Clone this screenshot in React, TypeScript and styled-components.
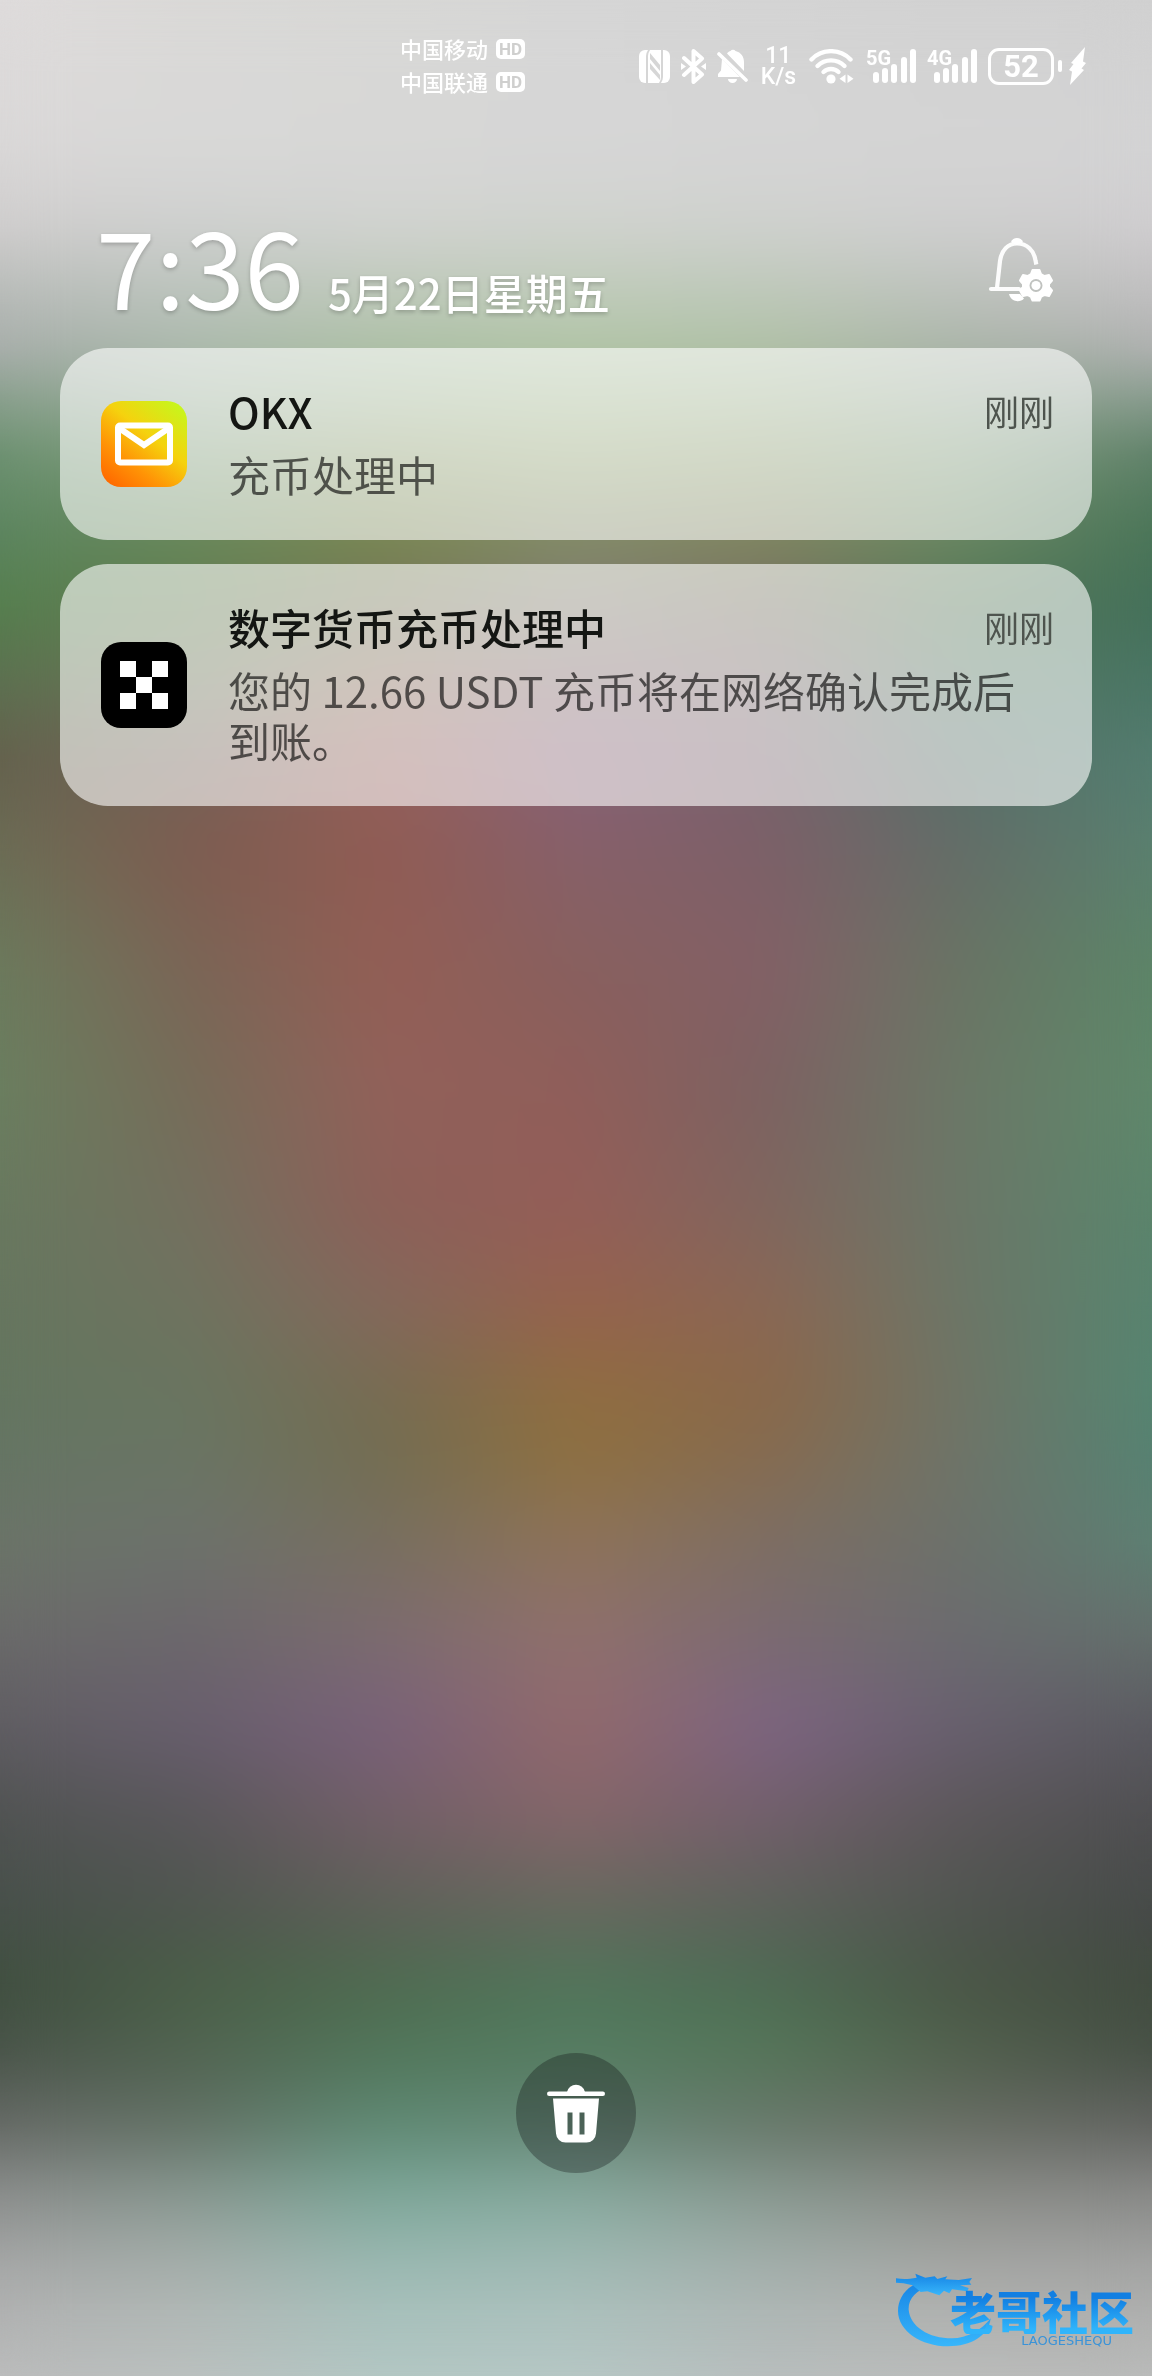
import React from "react";
import styled, { createGlobalStyle } from "styled-components";

const GlobalStyle = createGlobalStyle`
  *, *::before, *::after { box-sizing: border-box; }
  body {
    margin: 0;
    font-family: "Noto Sans CJK SC", "Noto Sans", sans-serif;
  }
  h1, h2, p { margin: 0; }
`;

/* Wallpaper: each row of colours spreads across the page and fades into the next row. */
type WallpaperRow = { at: number; colors: string };

const wallpaper: WallpaperRow[] = [
  { at: 0, colors: "#dfdcdc #dad9d7 #d8d8d6 #d6d6d6 #d4d4d4 #d2d2d2 #d1d1d1" },
  { at: 6.4, colors: "#d9d7d7 #d8d8d7 #d7d7d6 #d6d6d6 #d5d5d5 #d4d4d4 #d3d3d4" },
  { at: 9.6, colors: "#cfcdcd #cfd0cf #d1d3d0 #d0d3ce #cfd1ce #cfcfcf #cfcdcf" },
  { at: 12.8, colors: "#b4b8b5 #b7c1b8 #bac6b5 #bbc9b5 #bac6b5 #b9bfb8 #bdbcbd" },
  { at: 14.7, colors: "#a9aeac #adbaae #aec2a8 #b2c6a8 #b1c2a8 #acb5aa #b0b1b1" },
  { at: 16.6, colors: "#8ba08f #9cb09c #a0b596 #a5b994 #a2b494 #98aa98 #8a9d90" },
  { at: 19.1, colors: "#6b9070 #809e7a #909f70 #96a876 #90a174 #7f9c7a #5e8068" },
  { at: 22.3, colors: "#5c8560 #67875a #788750 #828a67 #808660 #6a8762 #4a7558" },
  { at: 25.5, colors: "#557f4e #627d50 #767658 #807d70 #767060 #537655 #44705a" },
  { at: 28.7, colors: "#5c7050 #6c7658 #8a6e5a #82696c #7a696b #557662 #4a7665" },
  { at: 31.9, colors: "#64614d #736258 #965f5a #876278 #78626c #566f68 #547d70" },
  { at: 35.7, colors: "#6b6d55 #7e5c50 #905c54 #87606a #7c6068 #646d68 #5a806f" },
  { at: 40.8, colors: "#6b7b5d #7a6556 #935e55 #88605e #836066 #697464 #5c8568" },
  { at: 45.9, colors: "#6a7f60 #766c59 #92615a #905e5a #7c6262 #6b7867 #5f886b" },
  { at: 51, colors: "#68795f #73705f #8c6058 #945e58 #80665e #6b7768 #5a856c" },
  { at: 54.8, colors: "#66765f #6f735f #84685c #96624d #8a6755 #6c7667 #58846f" },
  { at: 58.7, colors: "#647660 #697560 #776c52 #906d40 #8a684a #6f7466 #558571" },
  { at: 61.2, colors: "#657564 #6a7564 #736d52 #8e7040 #866b50 #6e7469 #568272" },
  { at: 65, colors: "#6b7468 #6d726c #786f60 #8e735a #7d6e64 #6c716b #5d8073" },
  { at: 68.9, colors: "#6a6a6a #6c676c #7c6b70 #90706e #7b6a72 #6b6b6f #646f6c" },
  { at: 72.7, colors: "#5f5d62 #685e6e #79617a #92696c #7d6482 #685f6f #5a5a60" },
  { at: 76.5, colors: "#505352 #59575a #725f67 #84666a #725f6b #5b5759 #4f4f51" },
  { at: 80.4, colors: "#47504a #4f564f #5d6158 #65695e #5c625a #505550 #464a48" },
  { at: 83.5, colors: "#404f40 #4a5f47 #4e6b50 #50755a #4d6b53 #4a5646 #424c40" },
  { at: 86.1, colors: "#485348 #506350 #517559 #547c60 #547658 #50604c #465045" },
  { at: 89.3, colors: "#646864 #617064 #5d8872 #658575 #667669 #666b62 #60625f" },
  { at: 92.5, colors: "#8d8f8e #8a9a93 #7fa89b #88aba0 #8b9b93 #8c8e8a #8b8c8a" },
  { at: 95.7, colors: "#a9aaaa #a9b1ae #9ebbb5 #a3bbb6 #a6b1ae #a8a9a7 #a6a7a6" },
  { at: 100, colors: "#bcbdbd #bcc2c1 #b5c8c5 #b8c8c6 #babfbf #bcbebd #bbbcbb" },
];

const Page = styled.div`
  display: grid;
  grid-template-columns: minmax(0, 1fr);
  min-height: 100vh;
`;

const Backdrop = styled.div`
  grid-area: 1 / 1;
  display: grid;
`;

const Band = styled.div<{ $from: number; $to: number; $colors: string }>`
  grid-area: 1 / 1;
  background: linear-gradient(to right, ${(p) => p.$colors.split(" ").join(", ")});
  mask-image: ${(p) =>
    p.$to === 0
      ? "none"
      : `linear-gradient(to bottom, transparent ${p.$from}%, #000 ${p.$to}%)`};
`;

const Haze = styled.div`
  grid-area: 1 / 1;
  backdrop-filter: blur(30px);
`;

const Screen = styled.div`
  grid-area: 1 / 1;
  position: relative;
  display: flex;
  flex-direction: column;
`;

const StatusBar = styled.div`
  display: flex;
  justify-content: space-between;
  align-items: center;
  padding: 32px 65px 0 400px;
  color: #fff;
`;

const Carriers = styled.div`
  display: flex;
  flex-direction: column;
  padding-bottom: 2px;
`;

const Carrier = styled.div`
  display: flex;
  align-items: center;
  gap: 8px;
  height: 33px;
  font-size: 22px;
  font-weight: 500;
  line-height: 33px;
  white-space: nowrap;
`;

const HdBadge = styled.span`
  width: 29px;
  height: 20px;
  border-radius: 5px;
  background: #fff;
  color: #cfcfce;
  font: 700 17px/20px Roboto, sans-serif;
  text-align: center;
`;

const StatusIcons = styled.div`
  display: flex;
  align-items: center;
  gap: 11px;
`;

const PowerGroup = styled.div`
  display: flex;
  align-items: center;
  gap: 7px;
`;

const NetSpeed = styled.div`
  display: flex;
  flex-direction: column;
  align-items: center;
  font: 500 23px/21px Roboto, sans-serif;
  padding: 0 2px;
`;

const Battery = styled.div`
  display: flex;
  align-items: center;
  gap: 4px;
  &::after {
    content: "";
    width: 4px;
    height: 12px;
    border-radius: 2px;
    background: #fff;
  }
`;

const BatteryLevel = styled.div`
  width: 66px;
  height: 37px;
  border: 3px solid #fff;
  border-radius: 11px;
  font: 700 31px/32px Roboto, sans-serif;
  text-align: center;
`;

const Header = styled.header`
  display: flex;
  justify-content: space-between;
  align-items: center;
  padding: 0 98px 0 96px;
  margin-top: 100px;
  height: 128px;
  color: #fff;
`;

const Clock = styled.div`
  display: flex;
  align-items: baseline;
  gap: 24px;
  text-shadow: 0 2px 4px rgba(0, 0, 0, 0.22);
  white-space: nowrap;
`;

const Time = styled.h1`
  font-size: 107px;
  font-weight: 400;
  line-height: 128px;
`;

const DateText = styled.p`
  font-size: 42px;
  font-weight: 500;
  line-height: 48px;
`;

const IconButton = styled.button`
  align-self: flex-end;
  display: flex;
  padding: 0 0 25px;
  border: 0;
  background: none;
  color: inherit;
`;

const List = styled.main`
  display: flex;
  flex-direction: column;
  gap: 24px;
  padding: 20px 60px 0;
`;

const Card = styled.article`
  display: flex;
  align-items: center;
  gap: 41px;
  padding: 38px 38px 38px 41px;
  border-radius: 48px;
  background: rgba(255, 255, 255, 0.6);
`;

const CardBody = styled.div`
  flex: 1;
  min-width: 0;
  display: flex;
  flex-direction: column;
  gap: 13px;
  padding-bottom: 3px;
`;

const CardTop = styled.div`
  display: flex;
  justify-content: space-between;
  align-items: center;
`;

const CardTitle = styled.h2`
  font-size: 42px;
  font-weight: 500;
  line-height: 50px;
  color: #141613;
`;

const Stamp = styled.time`
  font-size: 35px;
  line-height: 50px;
  color: #4e544e;
`;

const CardText = styled.p`
  font-size: 42px;
  line-height: 50px;
  color: rgba(0, 0, 0, 0.62);
`;

const AppIcon = styled.svg`
  flex: none;
  width: 86px;
  height: 86px;
`;

const Spacer = styled.div`
  flex: 1;
  min-height: 80px;
`;

const ClearButton = styled.button`
  align-self: center;
  display: flex;
  align-items: center;
  justify-content: center;
  width: 120px;
  height: 120px;
  padding: 0;
  border: 0;
  border-radius: 50%;
  background: rgba(10, 10, 14, 0.3);
`;

const Footer = styled.footer`
  display: flex;
  justify-content: flex-end;
  padding: 98px 18px 28px;
`;

const Watermark = styled.div`
  display: grid;
  grid-template-columns: 44px auto;
  width: 238px;
`;

const Dragon = styled.svg`
  grid-area: 1 / 1 / 2 / 3;
  width: 96px;
  height: 77px;
`;

const Brand = styled.div`
  grid-area: 1 / 2;
  display: flex;
  flex-direction: column;
  align-items: flex-end;
  padding-top: 15px;
`;

const BrandName = styled.span`
  font-size: 46px;
  font-weight: 900;
  line-height: 48px;
  color: transparent;
  background: linear-gradient(#127fe2 25%, #2fb4fb 90%);
  background-clip: text;
  -webkit-background-clip: text;
  white-space: nowrap;
`;

const BrandLatin = styled.span`
  padding-right: 22px;
  font: 13px/13px "DejaVu Sans", sans-serif;
  color: #3a93d8;
`;

const NfcIcon = () => (
  <svg width="31" height="33" viewBox="0 0 31 33" aria-hidden="true">
    <rect width="31" height="33" rx="6" fill="#fff" />
    <g fill="#d6d6d6">
      <path d="M7 6q0-3 2-6h2q-2 3-2 6v27H7z" />
      <path d="M24 27q0 3-2 6h-2q2-3 2-6V0h2z" />
      <path d="M11 3l10 12v6L11 9z" />
      <path d="M11 13l10 12v5L11 19z" />
    </g>
  </svg>
);

const BluetoothIcon = () => (
  <svg width="25" height="35" viewBox="0 0 25 35" aria-hidden="true">
    <path
      d="M3 9l18 16.500-8.500 7.500V2l8.500 7.500L3 26"
      fill="none"
      stroke="#fff"
      strokeWidth="4"
      strokeLinejoin="round"
      strokeLinecap="round"
    />
    <path d="M0 14l5 3.500-5 3.500zM25 14l-5 3.500 5 3.500z" fill="#fff" />
  </svg>
);

const MutedBellIcon = () => (
  <svg width="31" height="34" viewBox="0 0 31 34" aria-hidden="true">
    <path
      d="M10 4.500C11 3 12.500 2.300 13.500 2a3 3 0 0 1 5 0c5.500 1.500 8.500 5.500 8.500 11v9z"
      fill="#fff"
    />
    <path d="M5 10l18 18H1v-3l3-3.500zM11 30h9a4.500 4 0 0 1-9 0z" fill="#fff" />
    <path d="M2 5l27 26" stroke="#fff" strokeWidth="3.600" strokeLinecap="round" />
  </svg>
);

const WifiIcon = () => (
  <svg width="46" height="35" viewBox="0 0 46 35" aria-hidden="true">
    <g fill="none" stroke="#fff" strokeWidth="4.400" strokeLinecap="round">
      <path d="M2.500 10.500a27 27 0 0 1 39 0" />
      <path d="M8.500 17a19 19 0 0 1 27 0" />
      <path d="M14.500 23a11 11 0 0 1 15 0" />
    </g>
    <circle cx="22" cy="30" r="4.600" fill="#fff" />
    <path d="M36.500 25.500v8.500l-6-4.200zM38.500 25.500v8.500l6-4.200z" fill="#fff" />
  </svg>
);

const SignalSvg = styled.svg`
  width: 50px;
  height: 34px;
  overflow: visible;
`;

const signalBars = [
  { x: 7, y: 23 },
  { x: 16, y: 19 },
  { x: 25, y: 15 },
  { x: 35, y: 8 },
  { x: 44, y: 0 },
];

const SignalIcon = ({ label }: { label: string }) => (
  <SignalSvg viewBox="0 0 50 34" role="img" aria-label={label}>
    {signalBars.map((b) => (
      <rect key={b.x} x={b.x} y={b.y} width="6" height={34 - b.y} rx="3" fill="#fff" />
    ))}
    <text x="0" y="16" fontFamily="Roboto, sans-serif" fontWeight="700" fontSize="20" fill="#fff">
      {label}
    </text>
  </SignalSvg>
);

const BoltIcon = () => (
  <svg width="18" height="38" viewBox="0 0 18 38" aria-hidden="true">
    <path d="M16 0L2 16l2.500 1L0 23l3 1.500L1 38l14-15-2.500-1.500L17 16l-3-1.500z" fill="#fff" />
  </svg>
);

const BellSettingsIcon = () => (
  <svg width="66" height="66" viewBox="0 0 66 66" aria-hidden="true">
    <g fill="none" stroke="#fff" strokeOpacity="0.95" strokeWidth="4.200" strokeLinecap="round">
      <path d="M3 52h28" />
      <path d="M9 51l3-27C13.500 13 20 6.500 29 6.500c10 0 17 7 18.500 17l.8 4" strokeLinecap="butt" />
    </g>
    <path d="M23 5a6.500 6.500 0 0 1 12 0l-6 3z" fill="#fff" />
    <path d="M21 57h11l4 4.500c-4 4.500-13 3.500-15-4.500z" fill="#fff" />
    <path
      fill="#fff"
      fillRule="evenodd"
      stroke="#fff"
      strokeWidth="2"
      strokeLinejoin="round"
      d="M44.500 33h7l1.500 4 3.500 2 4.500-1 3 5.500-3 3.500v3l3 3.500-3 5.500-4.500-1-3.500 2-1.500 3.500h-7l-1.500-3.500-3.500-2-4.500 1-3-5.500 3-3.500v-3l-3-3.500 3-5.500 4.500 1 3.500-2zM48 41a7.500 7.500 0 1 0 0 15 7.500 7.500 0 0 0 0-15z"
    />
    <circle cx="48" cy="48.500" r="4.600" fill="#fff" />
  </svg>
);

const MailAppIcon = () => (
  <AppIcon viewBox="0 0 86 86" aria-hidden="true">
    <defs>
      <linearGradient id="mail" x1="0.15" y1="1" x2="0.9" y2="0.05">
        <stop offset="0" stopColor="#ff6a00" />
        <stop offset="0.28" stopColor="#ff9406" />
        <stop offset="0.6" stopColor="#f5d20e" />
        <stop offset="1" stopColor="#c8f51c" />
      </linearGradient>
    </defs>
    <rect width="86" height="86" rx="20" fill="url(#mail)" />
    <rect x="17" y="24.500" width="52" height="37" rx="2" fill="none" stroke="#fff" strokeWidth="6" />
    <path d="M18 27l25 17 25-17" fill="none" stroke="#fff" strokeWidth="6" />
  </AppIcon>
);

const OkxAppIcon = () => (
  <AppIcon viewBox="0 0 86 86" aria-hidden="true">
    <rect width="86" height="86" rx="20" fill="#000" />
    <path
      fill="#fff"
      d="M19 19h16v16H19zM51 19h16v16H51zM35 35h16v16H35zM19 51h16v16H19zM51 51h16v16H51z"
    />
  </AppIcon>
);

const TrashIcon = () => (
  <svg width="58" height="60" viewBox="0 0 58 60" aria-hidden="true">
    <g fill="#fff">
      <path d="M20 9a9.200 9.200 0 0 1 18 0z" />
      <rect x="0" y="8.500" width="58" height="4.500" rx="2.200" />
      <path
        fillRule="evenodd"
        d="M6 15.500h46l-3 35a9.500 9.500 0 0 1-9.500 9h-21a9.500 9.500 0 0 1-9.500-9zM20.500 29.500v22h5v-22zM32.500 29.500v22h5v-22z"
      />
    </g>
  </svg>
);

const notifications = [
  { title: "OKX", text: "充币处理中", time: "刚刚", Icon: MailAppIcon },
  {
    title: "数字货币充币处理中",
    text: "您的 12.66 USDT 充币将在网络确认完成后到账。",
    time: "刚刚",
    Icon: OkxAppIcon,
  },
];

export default function App() {
  return (
    <Page>
      <GlobalStyle />
      <Backdrop>
        {wallpaper.map((row, i) => (
          <Band
            key={row.at}
            $from={i === 0 ? 0 : wallpaper[i - 1].at}
            $to={row.at}
            $colors={row.colors}
          />
        ))}
        <Haze />
      </Backdrop>
      <Screen>
        <StatusBar>
          <Carriers>
            <Carrier>
              中国移动 <HdBadge>HD</HdBadge>
            </Carrier>
            <Carrier>
              中国联通 <HdBadge>HD</HdBadge>
            </Carrier>
          </Carriers>
          <StatusIcons>
            <NfcIcon />
            <BluetoothIcon />
            <MutedBellIcon />
            <NetSpeed>
              <span>11</span>
              <span>K/s</span>
            </NetSpeed>
            <WifiIcon />
            <SignalIcon label="5G" />
            <SignalIcon label="4G" />
            <PowerGroup>
              <Battery>
                <BatteryLevel>52</BatteryLevel>
              </Battery>
              <BoltIcon />
            </PowerGroup>
          </StatusIcons>
        </StatusBar>
        <Header>
          <Clock>
            <Time>7:36</Time>
            <DateText>5月22日星期五</DateText>
          </Clock>
          <IconButton type="button" aria-label="通知设置">
            <BellSettingsIcon />
          </IconButton>
        </Header>
        <List>
          {notifications.map(({ title, text, time, Icon }) => (
            <Card key={title}>
              <Icon />
              <CardBody>
                <CardTop>
                  <CardTitle>{title}</CardTitle>
                  <Stamp>{time}</Stamp>
                </CardTop>
                <CardText>{text}</CardText>
              </CardBody>
            </Card>
          ))}
        </List>
        <Spacer />
        <ClearButton type="button" aria-label="清除通知">
          <TrashIcon />
        </ClearButton>
        <Footer>
          <Watermark>
            <Dragon viewBox="48 62 288 231" aria-hidden="true">
              <defs>
                <linearGradient id="dragon" x1="0" y1="0" x2="0" y2="1">
                  <stop offset="0" stopColor="#1583e4" />
                  <stop offset="1" stopColor="#38b6fb" />
                </linearGradient>
              </defs>
              <g fill="url(#dragon)">
                <path d="M150 88C90 95 54 135 54 182c0 60 70 106 150 106 70 0 122-32 128-84-28 36-70 60-116 60-70 0-126-36-130-86-2-38 30-66 84-76z" />
                <path d="M48 84c24 4 40 2 62-2l-4-12 30 12 28-4 8 8 30-8-6 9 40 2 40-6-8 12 6 8-34 2 26 8-4 10-46-6-8 12-16-8-14 14-36-12-20 2-24-20-28-6-28-2z" />
              </g>
            </Dragon>
            <Brand>
              <BrandName>老哥社区</BrandName>
              <BrandLatin>LAOGESHEQU</BrandLatin>
            </Brand>
          </Watermark>
        </Footer>
      </Screen>
    </Page>
  );
}
